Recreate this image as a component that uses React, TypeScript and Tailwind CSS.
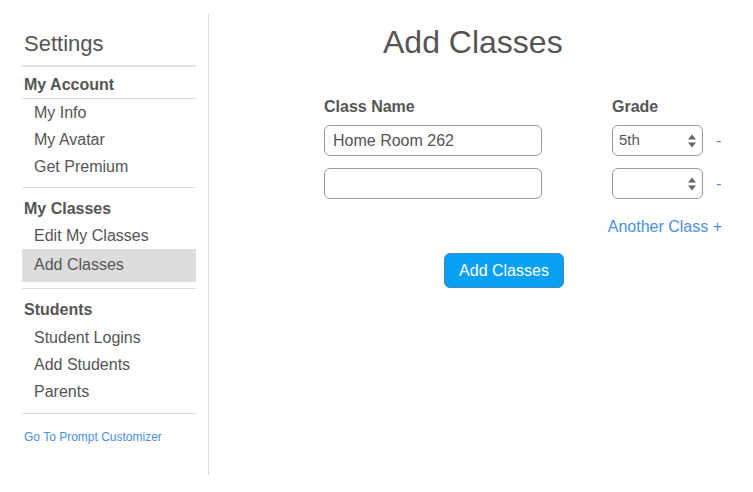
import React from "react";

const font = { fontFamily: '"Liberation Sans", Arial, sans-serif' };

function SideLink({ label, active, h }: { label: string; active?: boolean; h?: string }) {
  return (
    <div
      className={`pl-3 flex items-center text-[16px] text-[#555] ${
        active ? "bg-[#dddddd] h-[33px] pb-[2px]" : h ?? "h-[27px]"
      }`}
    >
      {label}
    </div>
  );
}

function GradeSelect({ value }: { value: string }) {
  return (
    <div className="w-[91px] h-[31px] border border-[#9a9a9a] rounded-[6px] flex items-center justify-between pl-[6px] pr-[5px] text-[15px] text-[#555] bg-white">
      <span>{value}</span>
      <svg width="10" height="16" viewBox="0 0 10 16">
        <path d="M1 6.5 L5 1.5 L9 6.5 Z" fill="#666" />
        <path d="M1 9.5 L5 14.5 L9 9.5 Z" fill="#666" />
      </svg>
    </div>
  );
}

export default function App() {
  const rows = [
    { name: "Home Room 262", grade: "5th" },
    { name: "", grade: "" },
  ];

  return (
    <div className="w-[753px] h-[492px] bg-white flex pt-[14px]" style={font}>
      <div className="w-[209px] h-[461px] border-r border-[#dcdcdc] pl-[22px] pr-[12px]">
        <div className="w-[174px]">
          <div className="text-[22px] text-[#555] pt-[16px] pb-[7px] pl-[2px] leading-[28px]">Settings</div>
          <div className="h-[2px] bg-[#e3e3e3]" />

          <div className="text-[16px] font-bold text-[#555] pt-[8px] pb-[4px] pl-[2px] border-b border-[#dcdcdc] leading-[19px]">
            My Account
          </div>
          <div className="pb-[7px]">
            <SideLink label="My Info" />
            <SideLink label="My Avatar" />
            <SideLink label="Get Premium" />
          </div>
          <div className="h-px bg-[#dcdcdc]" />

          <div className="text-[16px] font-bold text-[#555] pt-[11px] pb-[5px] pl-[2px] leading-[19px]">My Classes</div>
          <SideLink label="Edit My Classes" h="h-[26px]" />
          <SideLink label="Add Classes" active />
          <div className="h-px bg-[#dcdcdc] mt-[6px]" />

          <div className="text-[16px] font-bold text-[#555] pt-[11px] pb-[5px] pl-[2px] leading-[19px]">Students</div>
          <SideLink label="Student Logins" />
          <SideLink label="Add Students" />
          <SideLink label="Parents" />
          <div className="h-px bg-[#dcdcdc] mt-[8px]" />

          <div className="text-[12px] text-[#4a8fe0] pt-[14px] pl-[2px]">Go To Prompt Customizer</div>
        </div>
      </div>

      <div className="flex-1 pl-[115px]">
        <h1 className="text-[32px] text-[#555] leading-[36px] mt-[10px] pl-[59px]">Add Classes</h1>

        <div className="w-[400px] mt-[38px]">
          <div className="flex text-[16px] font-bold text-[#555] leading-[18px]">
            <div className="w-[288px]">Class Name</div>
            <div>Grade</div>
          </div>

          <div className="mt-[9px] flex flex-col gap-[12px]">
            {rows.map((r, i) => (
              <div key={i} className="flex items-center">
                <div className="w-[218px] h-[31px] border border-[#9a9a9a] rounded-[6px] flex items-center px-[8px] text-[16px] text-[#555]">
                  {r.name}
                </div>
                <div className="ml-[70px]">
                  <GradeSelect value={r.grade} />
                </div>
                <div className="ml-[13px] text-[16px] text-[#4a8fe0]">-</div>
              </div>
            ))}
          </div>

          <div className="text-right text-[16px] text-[#4a8fe0] mt-[16px] pr-[2px]">Another Class +</div>

          <div className="flex pl-[120px] mt-[14px]">
            <button className="w-[120px] h-[35px] rounded-[6px] bg-[#08a0f2] border border-[#4a8ab8] text-white text-[16px]">
              Add Classes
            </button>
          </div>
        </div>
      </div>
    </div>
  );
}
